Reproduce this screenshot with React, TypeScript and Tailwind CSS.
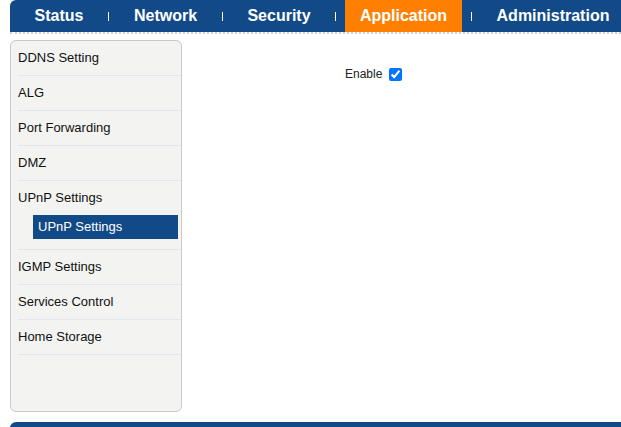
const tabs = [
  { label: "Status", w: "w-[98px]" },
  { label: "Network", w: "w-[113px]" },
  { label: "Security", w: "w-[112px]" },
  { label: "Application", w: "w-[135px]" },
  { label: "Administration", w: "w-[162px]" },
];

const menu = [
  { label: "DDNS Setting" },
  { label: "ALG" },
  { label: "Port Forwarding" },
  { label: "DMZ" },
  { label: "UPnP Settings", sub: "UPnP Settings" },
  { label: "IGMP Settings" },
  { label: "Services Control" },
  { label: "Home Storage" },
];

export default function App() {
  return (
    <div className="h-[427px] w-[621px] overflow-hidden bg-white pl-[10px] font-['Liberation_Sans',Arial,sans-serif]">
      <div className="flex h-8 w-[640px] items-stretch rounded-tl-md bg-[#124a87]">
        {tabs.map((t, i) => (
          <div key={t.label} className="flex items-center">
            {i > 0 && <span className="h-[9px] w-px bg-white" />}
            <div className={`flex h-8 justify-center ${t.w} ${t.label === "Application" ? "px-[9px]" : ""}`}>
              <div
                className={`flex flex-1 items-center justify-center text-base font-bold text-white ${
                  t.label === "Application" ? "bg-[#ff8000]" : ""
                }`}
              >
                {t.label}
              </div>
            </div>
          </div>
        ))}
      </div>
      <div className="h-[3px] border-t-2 border-dotted border-[#cfd2cc]" />

      <div className="mt-[5px] flex">
        <div className="h-[372px] w-[172px] rounded-md border border-[#c9c9c9] bg-[#f3f4f2]">
          {menu.map((m) => (
            <div key={m.label} className="ml-[7px] border-b border-[#e1e7ee]">
              <div className="flex h-[34px] items-center text-[13px] text-[#111]">{m.label}</div>
              {m.sub && (
                <div className="mb-[10px] ml-[15px] mr-[3px] flex h-6 items-center bg-[#124a87] pl-[5px] text-[13px] text-white">
                  {m.sub}
                </div>
              )}
            </div>
          ))}
        </div>
        <div className="flex-1 pl-[163px] pt-[26px]">
          <label className="flex items-center gap-[7px] text-xs text-[#222]">
            Enable
            <input type="checkbox" defaultChecked className="m-0 h-[13px] w-[13px]" />
          </label>
        </div>
      </div>

      <div className="mt-[10px] h-6 rounded-tl-md bg-[#124a87]" />
    </div>
  );
}
